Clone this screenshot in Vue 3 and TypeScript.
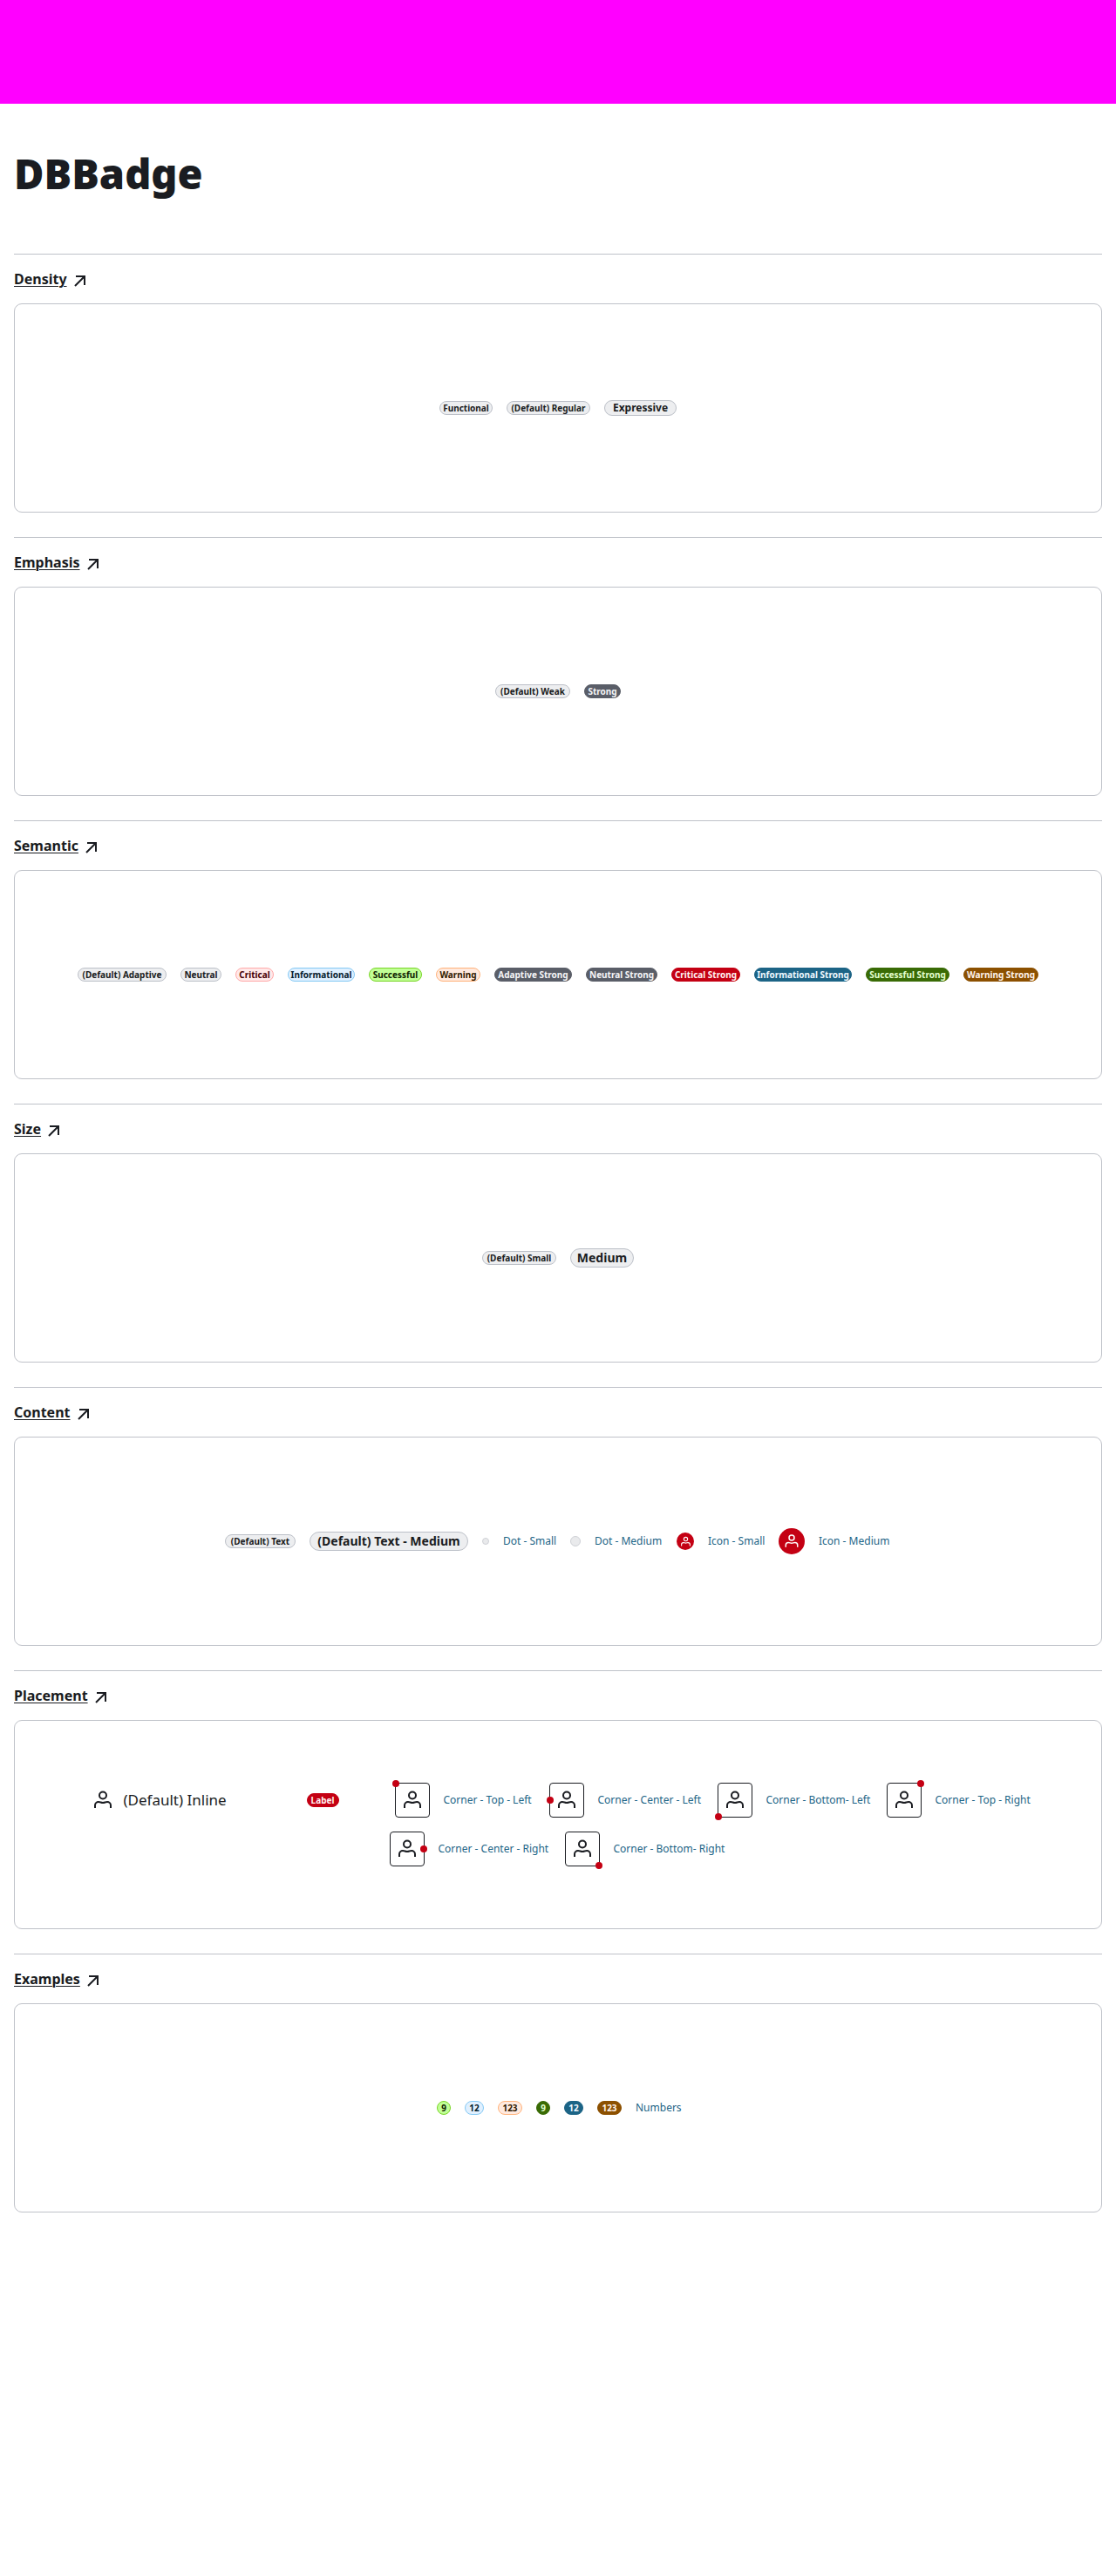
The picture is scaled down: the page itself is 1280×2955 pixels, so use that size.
<script setup lang="ts">
interface Item {
  kind: 'badge' | 'dot' | 'icon' | 'corner' | 'inline' | 'label'
  text?: string
  width?: number
  tone?: string
  size?: string
}
interface Section {
  title: string
  items: Item[]
}

const badge = (text: string, width: number, tone = 'adaptive', size = 'small'): Item => ({
  kind: 'badge',
  text,
  width,
  tone,
  size,
})
const label = (text: string, width: number): Item => ({ kind: 'label', text, width })
const corner = (place: string, text: string, width: number): Item => ({ kind: 'corner', tone: place, text, width })

const sections: Section[] = [
  {
    title: 'Density',
    items: [
      badge('Functional', 61),
      badge('(Default) Regular', 96),
      badge('Expressive', 83, 'adaptive', 'expressive'),
    ],
  },
  {
    title: 'Emphasis',
    items: [badge('(Default) Weak', 86), badge('Strong', 42, 'adaptive-strong')],
  },
  {
    title: 'Semantic',
    items: [
      badge('(Default) Adaptive', 102),
      badge('Neutral', 47),
      badge('Critical', 44, 'critical'),
      badge('Informational', 77, 'informational'),
      badge('Successful', 61, 'successful'),
      badge('Warning', 51, 'warning'),
      badge('Adaptive Strong', 89, 'adaptive-strong'),
      badge('Neutral Strong', 82, 'adaptive-strong'),
      badge('Critical Strong', 79, 'critical-strong'),
      badge('Informational Strong', 112, 'informational-strong'),
      badge('Successful Strong', 96, 'successful-strong'),
      badge('Warning Strong', 86, 'warning-strong'),
    ],
  },
  {
    title: 'Size',
    items: [badge('(Default) Small', 85), badge('Medium', 73, 'adaptive', 'medium')],
  },
  {
    title: 'Content',
    items: [
      badge('(Default) Text', 81),
      badge('(Default) Text - Medium', 182, 'adaptive', 'medium'),
      { kind: 'dot', size: 'small' },
      label('Dot - Small', 61),
      { kind: 'dot', size: 'medium' },
      label('Dot - Medium', 78),
      { kind: 'icon', size: 'small' },
      label('Icon - Small', 65),
      { kind: 'icon', size: 'medium' },
      label('Icon - Medium', 83),
    ],
  },
  {
    title: 'Placement',
    items: [
      { kind: 'inline', text: '(Default) Inline' },
      corner('top left', 'Corner - Top - Left', 105),
      corner('middle left', 'Corner - Center - Left', 121),
      corner('bottom left', 'Corner - Bottom- Left', 122),
      corner('top right', 'Corner - Top - Right', 113),
      corner('middle right', 'Corner - Center - Right', 129),
      corner('bottom right', 'Corner - Bottom- Right', 130),
    ],
  },
  {
    title: 'Examples',
    items: [
      badge('9', 16, 'successful'),
      badge('12', 22, 'informational'),
      badge('123', 28, 'warning'),
      badge('9', 16, 'successful-strong'),
      badge('12', 22, 'informational-strong'),
      badge('123', 28, 'warning-strong'),
      label('Numbers', 50),
    ],
  },
]
const person = 'M3 21v-3a4 4 0 0 1 4-4c2 0 3 1 5 1s3-1 5-1a4 4 0 0 1 4 4v3'
</script>

<template>
  <div class="page">
    <header class="banner"></header>
    <main class="content">
      <h1>DBBadge</h1>
      <section v-for="section in sections" :key="section.title" class="section">
        <a class="heading" href="#">
          <span>{{ section.title }}</span>
          <svg viewBox="0 0 20 20" aria-hidden="true"><path d="M5 5h10v10M15 5 4 16" /></svg>
        </a>
        <div class="card">
          <template v-for="(item, i) in section.items" :key="i">
            <span
              v-if="item.kind === 'badge'"
              class="badge"
              :class="[item.tone, item.size]"
              :style="{ width: item.width + 'px' }"
            >{{ item.text }}</span>
            <span v-else-if="item.kind === 'dot'" class="dot" :class="item.size"></span>
            <span v-else-if="item.kind === 'icon'" class="round" :class="item.size">
              <svg class="person" viewBox="0 0 24 24"><circle cx="12" cy="6.500" r="4" /><path :d="person" /></svg>
            </span>
            <span v-else-if="item.kind === 'label'" class="label" :style="{ width: item.width + 'px' }">{{ item.text }}</span>
            <div v-else-if="item.kind === 'inline'" class="inline">
              <svg class="person" viewBox="0 0 24 24"><circle cx="12" cy="6.500" r="4" /><path :d="person" /></svg>
              <span class="inline-text">{{ item.text }}</span>
              <span class="badge small critical-strong tag">Label</span>
            </div>
            <div v-else class="corner">
              <button type="button" class="tile" :aria-label="item.text">
                <svg class="person" viewBox="0 0 24 24"><circle cx="12" cy="6.500" r="4" /><path :d="person" /></svg>
                <span class="pin" :class="item.tone"></span>
              </button>
              <span class="label" :style="{ width: item.width + 'px' }">{{ item.text }}</span>
            </div>
          </template>
        </div>
      </section>
    </main>
  </div>
</template>

<style>
body {
  background: #fff;
}
</style>

<style scoped>
.page {
  min-height: 100vh;
  color: #1a1c21;
  font-family: 'Noto Sans', 'Open Sans', sans-serif;
}
.banner {
  height: 119px;
  background: #f0f;
}
.content {
  padding: 0 16px;
}
h1 {
  margin: 0;
  padding: 48px 0 60px;
  font-size: 47px;
  line-height: 64px;
  font-weight: 900;
}
.section {
  padding: 14px 0 28px;
  border-top: 1px solid #bfc2c9;
}
.heading {
  display: flex;
  width: fit-content;
  align-items: center;
  gap: 5px;
  height: 28px;
  margin-bottom: 14px;
  color: inherit;
  font-size: 16px;
  line-height: 28px;
  font-weight: 700;
  text-decoration: none;
}
.heading span {
  text-decoration: underline;
  text-decoration-thickness: 1px;
  text-underline-offset: 2px;
}
.heading svg {
  width: 20px;
  height: 20px;
  margin-top: 4px;
  fill: none;
  stroke: currentColor;
  stroke-width: 2;
}
.card {
  display: flex;
  flex-wrap: wrap;
  align-items: center;
  align-content: center;
  justify-content: center;
  gap: 16px;
  box-sizing: border-box;
  min-height: 240px;
  padding: 16px;
  border: 1px solid #bfc2c9;
  border-radius: 9px;
}
.badge {
  display: flex;
  flex: none;
  justify-content: center;
  box-sizing: border-box;
  height: 16px;
  border: 1px solid #bcc0c8;
  border-radius: 16px;
  background: #edeef0;
  font-size: 10px;
  line-height: 14px;
  font-weight: 700;
  white-space: nowrap;
}
.badge.expressive {
  height: 18px;
  font-size: 12px;
  line-height: 16px;
}
.badge.medium {
  height: 22px;
  font-size: 14px;
  line-height: 20px;
}
.badge.tag {
  width: 37px;
}
.critical { background: #ffe9e9; border-color: #ffa9a9; color: #450006; }
.informational { background: #e0f0ff; border-color: #84c9f4; color: #06202e; }
.successful { background: #c1ff96; border-color: #78d526; color: #102300; }
.warning { background: #ffe9de; border-color: #ffb27a; color: #301900; }
.adaptive-strong { background: #5a5e68; border-color: #5a5e68; color: #f5f5f7; }
.critical-strong { background: #c40013; border-color: #c40013; color: #fff1f1; }
.informational-strong { background: #1c6486; border-color: #1c6486; color: #eff8ff; }
.successful-strong { background: #396b05; border-color: #396b05; color: #e4ffd0; }
.warning-strong { background: #8c5000; border-color: #8c5000; color: #fff3ec; }

.dot {
  box-sizing: border-box;
  width: 8px;
  height: 8px;
  border: 1px solid #cfd1d6;
  border-radius: 50%;
  background: #e9eaec;
}
.dot.medium {
  width: 12px;
  height: 12px;
}
.round {
  display: flex;
  align-items: center;
  justify-content: center;
  width: 20px;
  height: 20px;
  border-radius: 50%;
  background: #c40013;
  color: #fff;
}
.round.medium {
  width: 30px;
  height: 30px;
}
.person {
  flex: none;
  width: 24px;
  height: 24px;
  fill: none;
  stroke: currentColor;
  stroke-width: 2;
}
.round .person {
  width: 18px;
  height: 18px;
}
.round.small .person {
  width: 13px;
  height: 13px;
}
.label {
  flex: none;
  color: #1c6486;
  font-size: 12px;
  line-height: 16px;
  white-space: nowrap;
}
.inline {
  display: flex;
  align-items: center;
  box-sizing: border-box;
  width: 342px;
  padding: 0 48px 0 11px;
}
.inline-text {
  flex: 1;
  padding-left: 12px;
  font-size: 17px;
  line-height: 24px;
}
.corner {
  display: flex;
  align-items: center;
  gap: 16px;
}
.tile {
  position: relative;
  display: flex;
  align-items: center;
  justify-content: center;
  width: 40px;
  height: 40px;
  padding: 0;
  border: 1px solid #1a1c21;
  border-radius: 4px;
  background: #fff;
  color: inherit;
}
.pin {
  position: absolute;
  width: 8px;
  height: 8px;
  border-radius: 50%;
  background: #c40013;
}
.top { top: -4px; }
.middle { top: 15px; }
.bottom { bottom: -4px; }
.left { left: -4px; }
.right { right: -4px; }
</style>
